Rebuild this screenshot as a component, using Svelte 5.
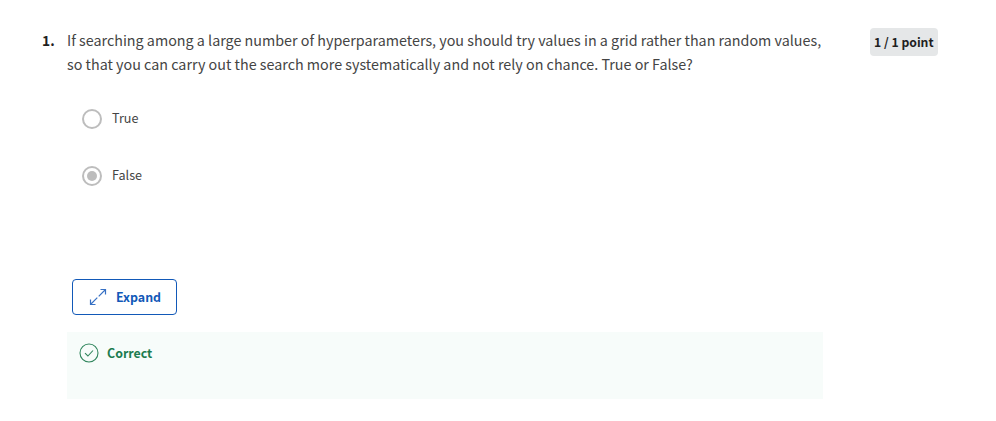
<script>
  const lines = [
    'If searching among a large number of hyperparameters, you should try values in a grid rather than random values,',
    'so that you can carry out the search more systematically and not rely on chance. True or False?'
  ];
  const options = ['True', 'False'];
  const selected = 'False';
</script>

<main>
  <div class="number">1.</div>
  <section>
    <div class="question">
      {#each lines as line}
        <div class="line">{line}</div>
      {/each}
    </div>
    <div class="options">
      {#each options as label}
        <div class="option">
          <span class="radio" class:checked={label === selected}></span>
          <span class="label">{label}</span>
        </div>
      {/each}
    </div>
    <button>
      <svg class="expand" width="18" height="18" viewBox="0 0 18 18"><path d="M9.7 8.3 16.5 1.5M11.5 1.5H16.5V6.5M8.3 9.7 1.5 16.5M1.5 11.5V16.5H6.5" /></svg>
      <span>Expand</span>
    </button>
    <div class="feedback">
      <svg class="check" width="20" height="20" viewBox="0 0 20 20"><circle cx="10" cy="10" r="9" /><path d="M6 10.2 8.9 13 14 7.5" /></svg>
      <span>Correct</span>
    </div>
  </section>
  <div class="points">1 / 1 point</div>
</main>

<style>
  :global(body) { background: #fff; }
  main { box-sizing: border-box; width: 996px; height: 421px; padding: 28px 0 0 42px; display: flex; align-items: flex-start; font-family: "Noto Sans CJK SC", "Noto Sans", sans-serif; color: #444; }
  svg { display: block; flex: none; }
  .number { width: 25px; font-size: 13.8px; line-height: 24px; font-weight: 700; color: #1f1f1f; }
  section { width: 756px; }
  .question { font-size: 14.32px; }
  .line { height: 24px; line-height: 24px; white-space: nowrap; }
  .options { padding: 33px 0 0 15px; font-size: 12.6px; line-height: 20px; }
  .option { display: flex; align-items: center; gap: 10px; height: 20px; margin-bottom: 37px; }
  .label { line-height: 20px; padding-bottom: 2px; }
  .radio { box-sizing: border-box; width: 20px; height: 20px; border: 2px solid #bdbdbd; border-radius: 50%; display: grid; place-items: center; }
  .checked::after { content: ''; width: 10px; height: 10px; border-radius: 50%; background: #bdbdbd; }
  button { box-sizing: border-box; margin: 93px 0 0 5px; width: 105px; height: 36px; padding: 0 0 0 16px; border: 1px solid #1259b8; border-radius: 4px; background: #fff; color: #1259b8; display: flex; align-items: center; gap: 9px; font: inherit; font-size: 12.4px; line-height: 20px; font-weight: 700; }
  .expand, .check { fill: none; stroke: currentColor; stroke-width: 1.1; }
  .expand { stroke: #3670c4; stroke-width: 1.2; }
  .check { stroke: #31865d; }
  .feedback { box-sizing: border-box; margin-top: 17px; height: 67px; padding: 11px 12px; background: #f7fcfa; color: #1d7c50; display: flex; gap: 8px; font-size: 12.4px; line-height: 20px; font-weight: 700; }
  .points { box-sizing: border-box; margin-left: 47px; width: 68px; height: 28px; border-radius: 4px; background: #e5e7e8; color: #1f1f1f; padding: 4px; font-size: 12.2px; line-height: 20px; font-weight: 700; white-space: nowrap; }
</style>
